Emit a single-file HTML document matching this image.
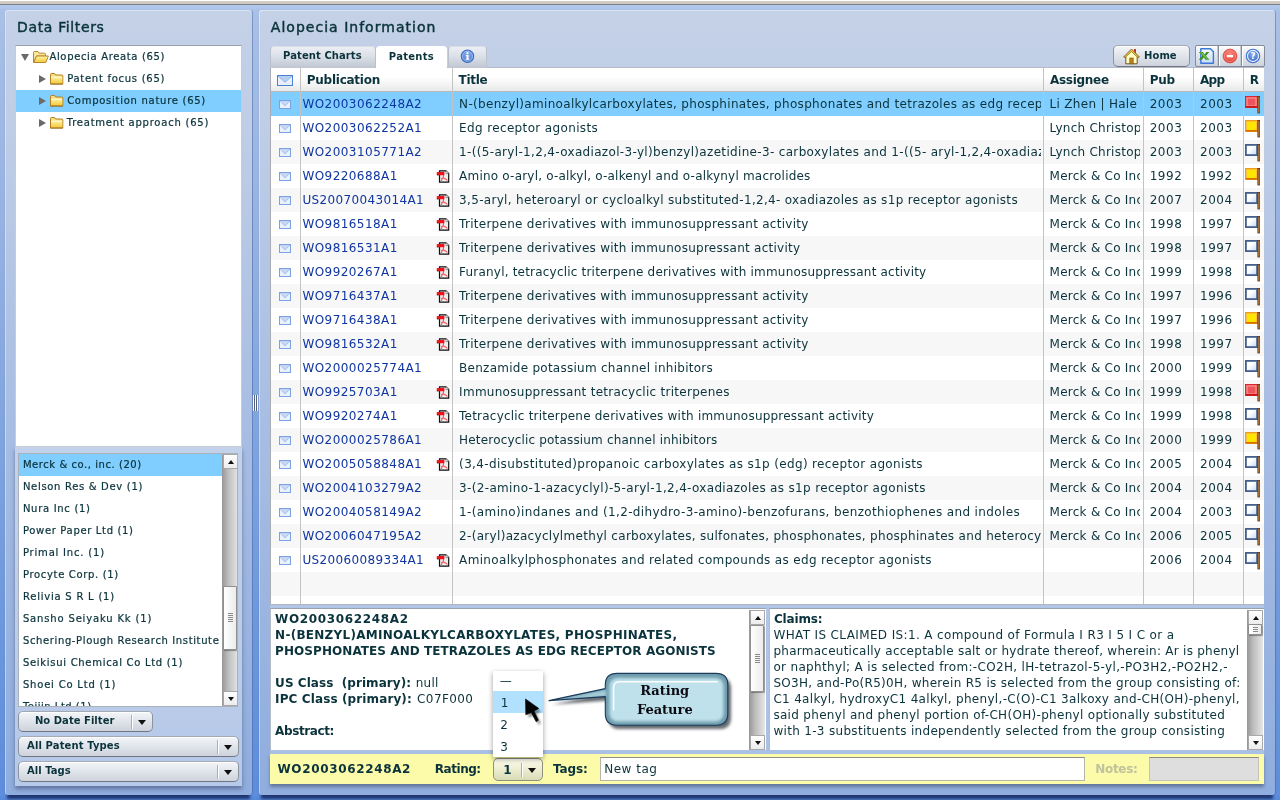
<!DOCTYPE html>
<html lang="en"><head><meta charset="utf-8"><title>Alopecia Information</title>
<style>
*{box-sizing:border-box;margin:0;padding:0}
html,body{width:1280px;height:800px;overflow:hidden}
body{position:relative;font-family:"DejaVu Sans", "Liberation Sans", sans-serif;font-size:12px;color:#0b333c;
 background:linear-gradient(to bottom,#fff 0,#fff 1px,#d6d2c9 1px,#c9c5bc 4px,#7f7f86 4px,#7f7f86 5px,#b1c9ef 5px,#a9c0e6 12px,#8eade0 300px,#6f99dc 600px,#5d8ddb 795px,#5788d8 800px);}
#root{position:absolute;left:0;top:0;width:1280px;height:800px;will-change:transform}
.abs{position:absolute}
.panel{position:absolute;border-radius:3px;background:linear-gradient(to bottom,#c4d1e7 0,#bfcde6 120px,#a9bee3 400px,#98b3e0 650px,#8fadde 785px);
 box-shadow:0 6px 3px -2px rgba(22,42,98,.88), 1px 0 0 rgba(70,100,160,.45), inset 1px 1px 0 rgba(255,255,255,.4);}
.ptitle{position:absolute;font-size:15px;line-height:18px;white-space:nowrap}
.nw{white-space:nowrap}
.t{position:absolute;white-space:pre;line-height:1}
.selbg{background:#7fceff}
.ttl{-webkit-text-stroke:.45px #0b333c}
.s10{-webkit-text-stroke:.22px #0b333c}
.tri.dn3{border-width:5px 4px 0 4px;border-color:#111 transparent transparent transparent}
svg{display:block;position:absolute}
.treebox{background:#fff;border-top:1px solid #9aa3ad;border-left:1px solid #c4ccd6;border-right:1px solid #c4ccd6;border-bottom:1px solid #c9d0d8;overflow:hidden}
.trow{position:absolute;left:0;width:100%;height:22px}
.trow.sel,.lrow.sel{background:#7fceff}
.tlabel{position:absolute;top:4px;font-size:10px;line-height:13px;letter-spacing:.55px;white-space:nowrap}
.tri{position:absolute;width:0;height:0;border-style:solid}
.tri.dn{border-width:7px 4px 0 4px;border-color:#6a6a6a transparent transparent transparent}
.tri.rt{border-width:4px 0 4px 7px;border-color:transparent transparent transparent #6a6a6a}
.tri.up{border-width:0 3px 4px 3px;border-color:transparent transparent #111 transparent}
.tri.dn2{border-width:4px 3.5px 0 3.5px;border-color:#111 transparent transparent transparent}
.lowbox{background:rgba(240,242,247,.4);box-shadow:0 3px 4px rgba(50,62,100,.5)}
.listbox{background:#fff;border:1px solid #a9b1ba;overflow:hidden}
.lrow{position:absolute;left:0;width:204px;height:22px;padding:4px 0 0 4px;font-size:10px;line-height:13px;letter-spacing:.5px;white-space:nowrap;overflow:hidden}
.vsb{position:absolute;background:linear-gradient(to right,#9c9c9c 0,#bdbdbd 35%,#e6e6e6 100%);border-left:1px solid #9a9a9a}
.sbtn{position:absolute;left:0;width:15px;height:15px;background:linear-gradient(#fff,#ececec);border:1px solid #a8a8a8}
.sthumb{position:absolute;left:0;width:14px;background:linear-gradient(to right,#fff,#ececec);border:1px solid #8f8f8f;border-radius:1px;box-shadow:1px 1px 1px rgba(0,0,0,.35)}
.sthumb i{position:absolute;left:4px;top:50%;margin-top:-5px;width:5px;height:9px;background:repeating-linear-gradient(to bottom,#8a8a8a 0,#8a8a8a 1px,transparent 1px,transparent 2px)}
.fbtn{border:1px solid #8c939d;border-top-color:#a4aab3;border-bottom-color:#6f7680;border-radius:5px;background:linear-gradient(#f3f5f8 0,#e2e6ec 45%,#cdd2dc 100%);font-size:10px;font-weight:bold;line-height:12px;box-shadow:inset 0 1px 0 #fff}

.tab{border:1px solid #b9c1cc;border-top-color:#d9dee6;border-bottom:none;border-radius:4px 4px 0 0;background:linear-gradient(#eceff4 0,#d9dee6 50%,#bfc6d1 100%);font-size:10px;font-weight:bold;line-height:12px}
.tab span{position:absolute;top:4px;white-space:nowrap}
.tab.on{background:#fff;border-color:#fff}
.ibar{border:1px solid #838c98;border-radius:2px;background:linear-gradient(#fbfcfd 0,#e4e8ee 45%,#cdd3dd 100%);box-shadow:inset 0 1px 0 #fff}
.ibar i{position:absolute;top:0;width:1px;height:20px;background:#838c98;box-shadow:1px 0 0 #fff,-1px 0 0 #c4cad4}
.grid{background:#fff;overflow:hidden}
.ghead{position:absolute;left:0;top:0;width:100%;height:24px;background:linear-gradient(#fff 0,#fff 40%,#e9e9e9 100%);border-bottom:1px solid #b9b9b9}
.hcell{position:absolute;top:4px;font-weight:bold;font-size:12px;line-height:15px;white-space:nowrap}
.grow{position:absolute;left:0;width:100%;height:24px}
.grow.alt{background:#f7f7f7}
.grow.sel{background:#7fceff}
.c{position:absolute;top:4px;line-height:15px;white-space:nowrap;overflow:hidden;letter-spacing:.3px}
.c.pub{color:#0f35a0}
.vline{position:absolute;top:0;width:1px;height:100%;background:#c3c3c3}
.dbox{background:#fff;border-top:1px solid #9aa3ad;border-left:1px solid #b5bcc5;overflow:hidden}
.dtext{position:absolute;line-height:16px;white-space:nowrap;letter-spacing:.2px}
.ls5{letter-spacing:.5px}
.ls2{letter-spacing:.2px}
.ybar{background:#fbfbaa;box-shadow:0 3px 3px rgba(60,68,90,.5)}
.fbtn.yb{background:linear-gradient(#fdfdf0 0,#ecedd0 50%,#d9dbb5 100%);border-color:#8f927a;font-size:12px}
.ddl{background:#fff;box-shadow:0 2px 5px rgba(0,0,0,.4);overflow:hidden}
.ddl div{position:absolute;left:0;width:100%;height:22px}
.ddl .hov{background:#b2e1ff}
.bsep{position:absolute;top:3px;width:1px;height:14px;background:#a9b0ba;box-shadow:1px 0 0 #fff}

</style></head><body>
<svg width="0" height="0" style="position:absolute"><defs>
<linearGradient id="fg" x1="0" y1="0" x2="0" y2="1"><stop offset="0" stop-color="#fff3a8"/><stop offset="1" stop-color="#f3c93a"/></linearGradient>
<linearGradient id="wf" x1="0" y1="0" x2="1" y2="1"><stop offset="0.4" stop-color="#fff"/><stop offset="1" stop-color="#bcd9f6"/></linearGradient>
<linearGradient id="xg" x1="0" y1="0" x2="0" y2="1"><stop offset="0" stop-color="#f2f7fe"/><stop offset="1" stop-color="#c9dcf7"/></linearGradient><radialGradient id="ig" cx=".5" cy=".35" r=".7"><stop offset="0" stop-color="#8fb2ee"/><stop offset="1" stop-color="#3f6fcb"/></radialGradient><radialGradient id="rg" cx=".5" cy=".35" r=".7"><stop offset="0" stop-color="#f98c80"/><stop offset="1" stop-color="#e2362f"/></radialGradient></defs></svg>
<div id="root">
<div class="panel" style="left:5px;top:10px;width:247px;height:785px"></div><span class="t ttl" style="left:17.09px;top:19.66px;font-size:14px;letter-spacing:0.634px;">Data Filters</span><div class="abs treebox" style="left:15px;top:45px;width:227px;height:402px"></div><span class="tri dn" style="left:21px;top:54px"></span><svg class="fold" style="left:33px;top:51px" width="16" height="12" viewBox="0 0 16 12"><path d="M0.5 11.5 V1.5 Q0.5 0.5 1.5 0.5 H5 L6.2 2.2 H11.5 Q12.5 2.2 12.5 3.2 V5 H3.6 Z" fill="#fbe9a0" stroke="#b8872c"/><path d="M0.8 11.5 L3.4 5 H15.4 L12.8 11.5 Z" fill="url(#fg)" stroke="#b8872c"/></svg><span class="t s10" style="left:49.45px;top:51.54px;font-size:10px;letter-spacing:0.653px;">Alopecia Areata (65)</span><span class="tri rt" style="left:39px;top:75px"></span><svg class="fold" style="left:50px;top:73px" width="14" height="12" viewBox="0 0 14 12"><path d="M0.5 11 V1.5 Q0.5 0.5 1.5 0.5 H4.6 L5.8 2 H11.8 Q12.8 2 12.8 3 V11 Z" fill="#f6dc7c" stroke="#b07f22"/><path d="M1 3.6 H12.3 V10.6 H1 Z" fill="url(#fg)"/><path d="M1.4 4.2 H11.8" stroke="#fffbe0" stroke-width=".9"/><path d="M0.5 11 H12.8" stroke="#9a6c18"/></svg><span class="t s10" style="left:67.15px;top:73.54px;font-size:10px;letter-spacing:0.730px;">Patent focus (65)</span><div class="abs selbg" style="left:16px;top:90px;width:225px;height:22px"></div><span class="tri rt" style="left:39px;top:97px"></span><svg class="fold" style="left:50px;top:95px" width="14" height="12" viewBox="0 0 14 12"><path d="M0.5 11 V1.5 Q0.5 0.5 1.5 0.5 H4.6 L5.8 2 H11.8 Q12.8 2 12.8 3 V11 Z" fill="#f6dc7c" stroke="#b07f22"/><path d="M1 3.6 H12.3 V10.6 H1 Z" fill="url(#fg)"/><path d="M1.4 4.2 H11.8" stroke="#fffbe0" stroke-width=".9"/><path d="M0.5 11 H12.8" stroke="#9a6c18"/></svg><span class="t s10" style="left:67.15px;top:95.54px;font-size:10px;letter-spacing:0.727px;">Composition nature (65)</span><span class="tri rt" style="left:39px;top:119px"></span><svg class="fold" style="left:50px;top:117px" width="14" height="12" viewBox="0 0 14 12"><path d="M0.5 11 V1.5 Q0.5 0.5 1.5 0.5 H4.6 L5.8 2 H11.8 Q12.8 2 12.8 3 V11 Z" fill="#f6dc7c" stroke="#b07f22"/><path d="M1 3.6 H12.3 V10.6 H1 Z" fill="url(#fg)"/><path d="M1.4 4.2 H11.8" stroke="#fffbe0" stroke-width=".9"/><path d="M0.5 11 H12.8" stroke="#9a6c18"/></svg><span class="t s10" style="left:66.75px;top:117.54px;font-size:10px;letter-spacing:0.774px;">Treatment approach (65)</span><div class="abs lowbox" style="left:15px;top:447px;width:227px;height:339px"></div><div class="abs listbox" style="left:18px;top:453px;width:220px;height:254px"><div class="abs" style="left:0;top:0;width:203px;height:252px;overflow:hidden"><div class="abs selbg" style="left:0;top:0px;width:203px;height:22px"></div><span class="t s10" style="left:3.95px;top:5.54px;font-size:10px;letter-spacing:0.553px;">Merck &amp; co., inc. (20)</span><span class="t s10" style="left:3.95px;top:27.54px;font-size:10px;letter-spacing:0.685px;">Nelson Res &amp; Dev (1)</span><span class="t s10" style="left:3.95px;top:49.54px;font-size:10px;letter-spacing:0.702px;">Nura Inc (1)</span><span class="t s10" style="left:3.95px;top:71.54px;font-size:10px;letter-spacing:0.666px;">Power Paper Ltd (1)</span><span class="t s10" style="left:3.95px;top:93.54px;font-size:10px;letter-spacing:0.801px;">Primal Inc. (1)</span><span class="t s10" style="left:3.95px;top:115.54px;font-size:10px;letter-spacing:0.667px;">Procyte Corp. (1)</span><span class="t s10" style="left:3.95px;top:137.54px;font-size:10px;letter-spacing:0.776px;">Relivia S R L (1)</span><span class="t s10" style="left:3.95px;top:159.54px;font-size:10px;letter-spacing:0.836px;">Sansho Seiyaku Kk (1)</span><span class="t s10" style="left:3.95px;top:181.54px;font-size:10px;letter-spacing:0.626px;">Schering-Plough Research Institute (1)</span><span class="t s10" style="left:3.95px;top:203.54px;font-size:10px;letter-spacing:0.704px;">Seikisui Chemical Co Ltd (1)</span><span class="t s10" style="left:3.95px;top:225.54px;font-size:10px;letter-spacing:0.801px;">Shoei Co Ltd (1)</span><span class="t s10" style="left:3.95px;top:247.54px;font-size:10px;letter-spacing:0.500px;">Teijin Ltd (1)</span></div><div class="vsb" style="left:203px;top:0;width:16px;height:252px"><div class="sbtn" style="top:0"><span class="tri up" style="left:4px;top:5px"></span></div><div class="sthumb" style="top:132px;height:64px"><i></i></div><div class="sbtn" style="bottom:0"><span class="tri dn2" style="left:4px;top:5px"></span></div></div></div><div class="abs fbtn" style="left:18px;top:710.5px;width:135px;height:21px"><i class="bsep" style="left:112px"></i><span class="tri dn3" style="left:118.5px;top:8px"></span></div><span class="t" style="left:34.95px;top:715.54px;font-size:10px;font-weight:bold;letter-spacing:0.035px;">No Date Filter</span><div class="abs fbtn" style="left:18px;top:735.5px;width:221px;height:21px"><i class="bsep" style="left:198px"></i><span class="tri dn3" style="left:204.5px;top:8px"></span></div><span class="t" style="left:27.10px;top:740.54px;font-size:10px;font-weight:bold;letter-spacing:0.112px;">All Patent Types</span><div class="abs fbtn" style="left:18px;top:760.5px;width:221px;height:21px"><i class="bsep" style="left:198px"></i><span class="tri dn3" style="left:204.5px;top:8px"></span></div><span class="t" style="left:27.10px;top:765.54px;font-size:10px;font-weight:bold;letter-spacing:0.012px;">All Tags</span><div class="abs" style="left:253px;top:395px;width:5px;height:16px;background:repeating-linear-gradient(to right,#fff 0,#fff 1px,#54607a 1px,#54607a 2px)"></div><div class="panel" style="left:259px;top:10px;width:1016px;height:785px"></div><span class="t ttl" style="left:270.79px;top:19.66px;font-size:14px;letter-spacing:1.022px;">Alopecia Information</span><div class="abs" style="left:270px;top:67px;width:994px;height:1px;background:#b4bbc6"></div><div class="abs tab" style="left:270px;top:46px;width:106px;height:22px"></div><span class="t" style="left:283.10px;top:50.54px;font-size:10px;font-weight:bold;letter-spacing:0.077px;">Patent Charts</span><div class="abs tab on" style="left:376px;top:46px;width:71px;height:22px"></div><span class="t" style="left:388.85px;top:51.54px;font-size:10px;font-weight:bold;letter-spacing:0.261px;">Patents</span><div class="abs tab" style="left:448px;top:46px;width:39px;height:22px"><svg width="15" height="15" viewBox="0 0 15 15" style="left:11px;top:2px"><circle cx="7.5" cy="7.2" r="6.2" fill="url(#ig)" stroke="#3d6cc4" stroke-width="1.1"/><circle cx="7.5" cy="7.2" r="5" fill="none" stroke="#a9c4f0" stroke-width=".8"/><rect x="6.6" y="6.1" width="1.9" height="4.4" fill="#fff"/><rect x="5.9" y="6.1" width="2" height="1" fill="#fff"/><rect x="5.8" y="9.7" width="3.5" height="1" fill="#fff"/><circle cx="7.5" cy="4.1" r="1.1" fill="#fff"/></svg></div><div class="abs fbtn" style="left:1113px;top:45px;width:77px;height:22px"><svg width="17" height="17" viewBox="0 0 17 17" style="left:9px;top:2px"><rect x="11" y="1" width="2" height="5" fill="#c0392b"/><path d="M8.5 1.2 L0.8 9 H2.8 V15.8 H14.2 V9 H16.2 Z" fill="#fffcc4" stroke="#6b5520" stroke-width="1"/><path d="M8.5 1.2 L0.8 9 H2.8 L8.5 3.6 L14.2 9 H16.2 Z" fill="#e9c95a" stroke="#9a741c" stroke-width=".8"/><rect x="6.8" y="10" width="3.4" height="5.8" fill="#b7811f" stroke="#7a5410" stroke-width=".6"/></svg></div><span class="t" style="left:1144.05px;top:50.54px;font-size:10px;font-weight:bold;letter-spacing:0.049px;">Home</span><div class="abs ibar" style="left:1195px;top:45px;width:70px;height:22px"><i style="left:22px"></i><i style="left:45px"></i><svg width="17" height="17" viewBox="0 0 17 17" style="left:2px;top:2px"><path d="M2.8 .8 H12.4 L15.4 3.8 V15.3 H2.8 Z" fill="url(#xg)" stroke="#3a78d8" stroke-width="1.4" stroke-linejoin="round"/><path d="M.8 4 H4.8 L6.6 6.4 L8.4 4 H11.4 L8 7.8 L11.4 11.7 H7.6 L5.8 9.3 L4 11.7 H.8 L4.2 7.8 Z" fill="#3d8f1e"/><path d="M2.2 4.6 L9.6 11.2 M3.4 4.6 L10.4 10.8" stroke="#8fd070" stroke-width=".7" fill="none"/></svg><svg width="16" height="16" viewBox="0 0 16 16" style="left:26px;top:2px"><circle cx="8" cy="8" r="6.9" fill="url(#rg)" stroke="#e0453c" stroke-width=".8"/><circle cx="8" cy="8" r="5.6" fill="none" stroke="#f7988c" stroke-width=".7"/><rect x="4.8" y="7" width="6.4" height="2.2" rx=".4" fill="#fff"/></svg><svg width="16" height="16" viewBox="0 0 16 16" style="left:49px;top:2px"><circle cx="8" cy="8" r="6.7" fill="#e9f0fb" stroke="#3f74d0" stroke-width="1.1"/><circle cx="8" cy="8" r="4.9" fill="url(#ig)"/><text x="8" y="11.2" text-anchor="middle" font-family="'DejaVu Sans',sans-serif" font-weight="bold" font-size="9" fill="#fff">?</text></svg></div><div class="abs grid" style="left:270px;top:68px;width:993.5px;height:536px"><div class="ghead"></div><svg class="mail" style="left:7px;top:7px" width="16" height="11" viewBox="0 0 16 11"><rect x="0.5" y="0.5" width="15" height="10" fill="#e9f0fc" stroke="#4a80d4"/><path d="M1 1 L8.0 7.260000000000001 L15 1 Z" fill="#8fb2ea" opacity=".55"/><path d="M1 1 L8.0 7.260000000000001 L15 1" fill="none" stroke="#8fb2ea" stroke-width="1"/></svg><span class="t" style="left:36.72px;top:5.85px;font-size:12px;font-weight:bold;letter-spacing:-0.246px;">Publication</span><span class="t" style="left:188.62px;top:5.85px;font-size:12px;font-weight:bold;letter-spacing:-0.309px;">Title</span><span class="t" style="left:780.02px;top:5.85px;font-size:12px;font-weight:bold;letter-spacing:-0.293px;">Assignee</span><span class="t" style="left:879.72px;top:5.85px;font-size:12px;font-weight:bold;letter-spacing:-0.239px;">Pub</span><span class="t" style="left:930.02px;top:5.85px;font-size:12px;font-weight:bold;letter-spacing:-0.754px;">App</span><span class="t" style="left:979.82px;top:5.85px;font-size:12px;font-weight:bold;">R</span><div class="grow sel" style="top:24px"></div><div class="grow" style="top:48px"></div><div class="grow alt" style="top:72px"></div><div class="grow" style="top:96px"></div><div class="grow alt" style="top:120px"></div><div class="grow" style="top:144px"></div><div class="grow alt" style="top:168px"></div><div class="grow" style="top:192px"></div><div class="grow alt" style="top:216px"></div><div class="grow" style="top:240px"></div><div class="grow alt" style="top:264px"></div><div class="grow" style="top:288px"></div><div class="grow alt" style="top:312px"></div><div class="grow" style="top:336px"></div><div class="grow alt" style="top:360px"></div><div class="grow" style="top:384px"></div><div class="grow alt" style="top:408px"></div><div class="grow" style="top:432px"></div><div class="grow alt" style="top:456px"></div><div class="grow" style="top:480px"></div><div class="grow alt" style="top:504px"></div><svg class="mail" style="left:9px;top:32px" width="12" height="9" viewBox="0 0 12 9"><rect x="0.5" y="0.5" width="11" height="8" fill="#eaf1fc" stroke="#79a2e4"/><path d="M1 1 L6.0 5.94 L11 1 Z" fill="#a9c3ee" opacity=".55"/><path d="M1 1 L6.0 5.94 L11 1" fill="none" stroke="#a9c3ee" stroke-width="1"/></svg><svg class="mail" style="left:9px;top:56px" width="12" height="9" viewBox="0 0 12 9"><rect x="0.5" y="0.5" width="11" height="8" fill="#eaf1fc" stroke="#79a2e4"/><path d="M1 1 L6.0 5.94 L11 1 Z" fill="#a9c3ee" opacity=".55"/><path d="M1 1 L6.0 5.94 L11 1" fill="none" stroke="#a9c3ee" stroke-width="1"/></svg><svg class="mail" style="left:9px;top:80px" width="12" height="9" viewBox="0 0 12 9"><rect x="0.5" y="0.5" width="11" height="8" fill="#eaf1fc" stroke="#79a2e4"/><path d="M1 1 L6.0 5.94 L11 1 Z" fill="#a9c3ee" opacity=".55"/><path d="M1 1 L6.0 5.94 L11 1" fill="none" stroke="#a9c3ee" stroke-width="1"/></svg><svg class="mail" style="left:9px;top:104px" width="12" height="9" viewBox="0 0 12 9"><rect x="0.5" y="0.5" width="11" height="8" fill="#eaf1fc" stroke="#79a2e4"/><path d="M1 1 L6.0 5.94 L11 1 Z" fill="#a9c3ee" opacity=".55"/><path d="M1 1 L6.0 5.94 L11 1" fill="none" stroke="#a9c3ee" stroke-width="1"/></svg><svg class="mail" style="left:9px;top:128px" width="12" height="9" viewBox="0 0 12 9"><rect x="0.5" y="0.5" width="11" height="8" fill="#eaf1fc" stroke="#79a2e4"/><path d="M1 1 L6.0 5.94 L11 1 Z" fill="#a9c3ee" opacity=".55"/><path d="M1 1 L6.0 5.94 L11 1" fill="none" stroke="#a9c3ee" stroke-width="1"/></svg><svg class="mail" style="left:9px;top:152px" width="12" height="9" viewBox="0 0 12 9"><rect x="0.5" y="0.5" width="11" height="8" fill="#eaf1fc" stroke="#79a2e4"/><path d="M1 1 L6.0 5.94 L11 1 Z" fill="#a9c3ee" opacity=".55"/><path d="M1 1 L6.0 5.94 L11 1" fill="none" stroke="#a9c3ee" stroke-width="1"/></svg><svg class="mail" style="left:9px;top:176px" width="12" height="9" viewBox="0 0 12 9"><rect x="0.5" y="0.5" width="11" height="8" fill="#eaf1fc" stroke="#79a2e4"/><path d="M1 1 L6.0 5.94 L11 1 Z" fill="#a9c3ee" opacity=".55"/><path d="M1 1 L6.0 5.94 L11 1" fill="none" stroke="#a9c3ee" stroke-width="1"/></svg><svg class="mail" style="left:9px;top:200px" width="12" height="9" viewBox="0 0 12 9"><rect x="0.5" y="0.5" width="11" height="8" fill="#eaf1fc" stroke="#79a2e4"/><path d="M1 1 L6.0 5.94 L11 1 Z" fill="#a9c3ee" opacity=".55"/><path d="M1 1 L6.0 5.94 L11 1" fill="none" stroke="#a9c3ee" stroke-width="1"/></svg><svg class="mail" style="left:9px;top:224px" width="12" height="9" viewBox="0 0 12 9"><rect x="0.5" y="0.5" width="11" height="8" fill="#eaf1fc" stroke="#79a2e4"/><path d="M1 1 L6.0 5.94 L11 1 Z" fill="#a9c3ee" opacity=".55"/><path d="M1 1 L6.0 5.94 L11 1" fill="none" stroke="#a9c3ee" stroke-width="1"/></svg><svg class="mail" style="left:9px;top:248px" width="12" height="9" viewBox="0 0 12 9"><rect x="0.5" y="0.5" width="11" height="8" fill="#eaf1fc" stroke="#79a2e4"/><path d="M1 1 L6.0 5.94 L11 1 Z" fill="#a9c3ee" opacity=".55"/><path d="M1 1 L6.0 5.94 L11 1" fill="none" stroke="#a9c3ee" stroke-width="1"/></svg><svg class="mail" style="left:9px;top:272px" width="12" height="9" viewBox="0 0 12 9"><rect x="0.5" y="0.5" width="11" height="8" fill="#eaf1fc" stroke="#79a2e4"/><path d="M1 1 L6.0 5.94 L11 1 Z" fill="#a9c3ee" opacity=".55"/><path d="M1 1 L6.0 5.94 L11 1" fill="none" stroke="#a9c3ee" stroke-width="1"/></svg><svg class="mail" style="left:9px;top:296px" width="12" height="9" viewBox="0 0 12 9"><rect x="0.5" y="0.5" width="11" height="8" fill="#eaf1fc" stroke="#79a2e4"/><path d="M1 1 L6.0 5.94 L11 1 Z" fill="#a9c3ee" opacity=".55"/><path d="M1 1 L6.0 5.94 L11 1" fill="none" stroke="#a9c3ee" stroke-width="1"/></svg><svg class="mail" style="left:9px;top:320px" width="12" height="9" viewBox="0 0 12 9"><rect x="0.5" y="0.5" width="11" height="8" fill="#eaf1fc" stroke="#79a2e4"/><path d="M1 1 L6.0 5.94 L11 1 Z" fill="#a9c3ee" opacity=".55"/><path d="M1 1 L6.0 5.94 L11 1" fill="none" stroke="#a9c3ee" stroke-width="1"/></svg><svg class="mail" style="left:9px;top:344px" width="12" height="9" viewBox="0 0 12 9"><rect x="0.5" y="0.5" width="11" height="8" fill="#eaf1fc" stroke="#79a2e4"/><path d="M1 1 L6.0 5.94 L11 1 Z" fill="#a9c3ee" opacity=".55"/><path d="M1 1 L6.0 5.94 L11 1" fill="none" stroke="#a9c3ee" stroke-width="1"/></svg><svg class="mail" style="left:9px;top:368px" width="12" height="9" viewBox="0 0 12 9"><rect x="0.5" y="0.5" width="11" height="8" fill="#eaf1fc" stroke="#79a2e4"/><path d="M1 1 L6.0 5.94 L11 1 Z" fill="#a9c3ee" opacity=".55"/><path d="M1 1 L6.0 5.94 L11 1" fill="none" stroke="#a9c3ee" stroke-width="1"/></svg><svg class="mail" style="left:9px;top:392px" width="12" height="9" viewBox="0 0 12 9"><rect x="0.5" y="0.5" width="11" height="8" fill="#eaf1fc" stroke="#79a2e4"/><path d="M1 1 L6.0 5.94 L11 1 Z" fill="#a9c3ee" opacity=".55"/><path d="M1 1 L6.0 5.94 L11 1" fill="none" stroke="#a9c3ee" stroke-width="1"/></svg><svg class="mail" style="left:9px;top:416px" width="12" height="9" viewBox="0 0 12 9"><rect x="0.5" y="0.5" width="11" height="8" fill="#eaf1fc" stroke="#79a2e4"/><path d="M1 1 L6.0 5.94 L11 1 Z" fill="#a9c3ee" opacity=".55"/><path d="M1 1 L6.0 5.94 L11 1" fill="none" stroke="#a9c3ee" stroke-width="1"/></svg><svg class="mail" style="left:9px;top:440px" width="12" height="9" viewBox="0 0 12 9"><rect x="0.5" y="0.5" width="11" height="8" fill="#eaf1fc" stroke="#79a2e4"/><path d="M1 1 L6.0 5.94 L11 1 Z" fill="#a9c3ee" opacity=".55"/><path d="M1 1 L6.0 5.94 L11 1" fill="none" stroke="#a9c3ee" stroke-width="1"/></svg><svg class="mail" style="left:9px;top:464px" width="12" height="9" viewBox="0 0 12 9"><rect x="0.5" y="0.5" width="11" height="8" fill="#eaf1fc" stroke="#79a2e4"/><path d="M1 1 L6.0 5.94 L11 1 Z" fill="#a9c3ee" opacity=".55"/><path d="M1 1 L6.0 5.94 L11 1" fill="none" stroke="#a9c3ee" stroke-width="1"/></svg><svg class="mail" style="left:9px;top:488px" width="12" height="9" viewBox="0 0 12 9"><rect x="0.5" y="0.5" width="11" height="8" fill="#eaf1fc" stroke="#79a2e4"/><path d="M1 1 L6.0 5.94 L11 1 Z" fill="#a9c3ee" opacity=".55"/><path d="M1 1 L6.0 5.94 L11 1" fill="none" stroke="#a9c3ee" stroke-width="1"/></svg><div class="abs" style="left:31px;top:24px;width:151px;height:512px;overflow:hidden"><span class="t" style="left:1.42px;top:5.85px;font-size:12px;letter-spacing:0.450px;color:#0f35a0;">WO2003062248A2</span><span class="t" style="left:1.42px;top:29.85px;font-size:12px;letter-spacing:0.450px;color:#0f35a0;">WO2003062252A1</span><span class="t" style="left:1.42px;top:53.85px;font-size:12px;letter-spacing:0.450px;color:#0f35a0;">WO2003105771A2</span><span class="t" style="left:1.42px;top:77.85px;font-size:12px;letter-spacing:0.435px;color:#0f35a0;">WO9220688A1</span><svg class="pdf" style="left:135px;top:77.5px" width="14" height="13" viewBox="0 0 14 13"><path d="M3.5 0.8 H10 L12.7 3.5 V12.2 H3.5 Z" fill="#ececec" stroke="#111" stroke-width="1.2"/><path d="M10 0.8 V3.5 H12.7" fill="#fff" stroke="#555" stroke-width="0.6"/><path d="M5 11 C7 8 8 6 7.6 4.6 M5.2 8.6 C7 7.6 9.5 8.4 11.4 10.4" fill="none" stroke="#f0565a" stroke-width="1.1"/><rect x="0.8" y="2" width="7.6" height="3.2" rx="0.6" fill="#f0121a"/><rect x="0.8" y="4.4" width="1.6" height="1" fill="#7a3a10"/></svg><span class="t" style="left:1.42px;top:101.85px;font-size:12px;letter-spacing:0.366px;color:#0f35a0;">US20070043014A1</span><svg class="pdf" style="left:135px;top:101.5px" width="14" height="13" viewBox="0 0 14 13"><path d="M3.5 0.8 H10 L12.7 3.5 V12.2 H3.5 Z" fill="#ececec" stroke="#111" stroke-width="1.2"/><path d="M10 0.8 V3.5 H12.7" fill="#fff" stroke="#555" stroke-width="0.6"/><path d="M5 11 C7 8 8 6 7.6 4.6 M5.2 8.6 C7 7.6 9.5 8.4 11.4 10.4" fill="none" stroke="#f0565a" stroke-width="1.1"/><rect x="0.8" y="2" width="7.6" height="3.2" rx="0.6" fill="#f0121a"/><rect x="0.8" y="4.4" width="1.6" height="1" fill="#7a3a10"/></svg><span class="t" style="left:1.42px;top:125.85px;font-size:12px;letter-spacing:0.435px;color:#0f35a0;">WO9816518A1</span><svg class="pdf" style="left:135px;top:125.5px" width="14" height="13" viewBox="0 0 14 13"><path d="M3.5 0.8 H10 L12.7 3.5 V12.2 H3.5 Z" fill="#ececec" stroke="#111" stroke-width="1.2"/><path d="M10 0.8 V3.5 H12.7" fill="#fff" stroke="#555" stroke-width="0.6"/><path d="M5 11 C7 8 8 6 7.6 4.6 M5.2 8.6 C7 7.6 9.5 8.4 11.4 10.4" fill="none" stroke="#f0565a" stroke-width="1.1"/><rect x="0.8" y="2" width="7.6" height="3.2" rx="0.6" fill="#f0121a"/><rect x="0.8" y="4.4" width="1.6" height="1" fill="#7a3a10"/></svg><span class="t" style="left:1.42px;top:149.85px;font-size:12px;letter-spacing:0.435px;color:#0f35a0;">WO9816531A1</span><svg class="pdf" style="left:135px;top:149.5px" width="14" height="13" viewBox="0 0 14 13"><path d="M3.5 0.8 H10 L12.7 3.5 V12.2 H3.5 Z" fill="#ececec" stroke="#111" stroke-width="1.2"/><path d="M10 0.8 V3.5 H12.7" fill="#fff" stroke="#555" stroke-width="0.6"/><path d="M5 11 C7 8 8 6 7.6 4.6 M5.2 8.6 C7 7.6 9.5 8.4 11.4 10.4" fill="none" stroke="#f0565a" stroke-width="1.1"/><rect x="0.8" y="2" width="7.6" height="3.2" rx="0.6" fill="#f0121a"/><rect x="0.8" y="4.4" width="1.6" height="1" fill="#7a3a10"/></svg><span class="t" style="left:1.42px;top:173.85px;font-size:12px;letter-spacing:0.435px;color:#0f35a0;">WO9920267A1</span><svg class="pdf" style="left:135px;top:173.5px" width="14" height="13" viewBox="0 0 14 13"><path d="M3.5 0.8 H10 L12.7 3.5 V12.2 H3.5 Z" fill="#ececec" stroke="#111" stroke-width="1.2"/><path d="M10 0.8 V3.5 H12.7" fill="#fff" stroke="#555" stroke-width="0.6"/><path d="M5 11 C7 8 8 6 7.6 4.6 M5.2 8.6 C7 7.6 9.5 8.4 11.4 10.4" fill="none" stroke="#f0565a" stroke-width="1.1"/><rect x="0.8" y="2" width="7.6" height="3.2" rx="0.6" fill="#f0121a"/><rect x="0.8" y="4.4" width="1.6" height="1" fill="#7a3a10"/></svg><span class="t" style="left:1.42px;top:197.85px;font-size:12px;letter-spacing:0.435px;color:#0f35a0;">WO9716437A1</span><svg class="pdf" style="left:135px;top:197.5px" width="14" height="13" viewBox="0 0 14 13"><path d="M3.5 0.8 H10 L12.7 3.5 V12.2 H3.5 Z" fill="#ececec" stroke="#111" stroke-width="1.2"/><path d="M10 0.8 V3.5 H12.7" fill="#fff" stroke="#555" stroke-width="0.6"/><path d="M5 11 C7 8 8 6 7.6 4.6 M5.2 8.6 C7 7.6 9.5 8.4 11.4 10.4" fill="none" stroke="#f0565a" stroke-width="1.1"/><rect x="0.8" y="2" width="7.6" height="3.2" rx="0.6" fill="#f0121a"/><rect x="0.8" y="4.4" width="1.6" height="1" fill="#7a3a10"/></svg><span class="t" style="left:1.42px;top:221.85px;font-size:12px;letter-spacing:0.435px;color:#0f35a0;">WO9716438A1</span><svg class="pdf" style="left:135px;top:221.5px" width="14" height="13" viewBox="0 0 14 13"><path d="M3.5 0.8 H10 L12.7 3.5 V12.2 H3.5 Z" fill="#ececec" stroke="#111" stroke-width="1.2"/><path d="M10 0.8 V3.5 H12.7" fill="#fff" stroke="#555" stroke-width="0.6"/><path d="M5 11 C7 8 8 6 7.6 4.6 M5.2 8.6 C7 7.6 9.5 8.4 11.4 10.4" fill="none" stroke="#f0565a" stroke-width="1.1"/><rect x="0.8" y="2" width="7.6" height="3.2" rx="0.6" fill="#f0121a"/><rect x="0.8" y="4.4" width="1.6" height="1" fill="#7a3a10"/></svg><span class="t" style="left:1.42px;top:245.85px;font-size:12px;letter-spacing:0.435px;color:#0f35a0;">WO9816532A1</span><svg class="pdf" style="left:135px;top:245.5px" width="14" height="13" viewBox="0 0 14 13"><path d="M3.5 0.8 H10 L12.7 3.5 V12.2 H3.5 Z" fill="#ececec" stroke="#111" stroke-width="1.2"/><path d="M10 0.8 V3.5 H12.7" fill="#fff" stroke="#555" stroke-width="0.6"/><path d="M5 11 C7 8 8 6 7.6 4.6 M5.2 8.6 C7 7.6 9.5 8.4 11.4 10.4" fill="none" stroke="#f0565a" stroke-width="1.1"/><rect x="0.8" y="2" width="7.6" height="3.2" rx="0.6" fill="#f0121a"/><rect x="0.8" y="4.4" width="1.6" height="1" fill="#7a3a10"/></svg><span class="t" style="left:1.42px;top:269.85px;font-size:12px;letter-spacing:0.450px;color:#0f35a0;">WO2000025774A1</span><span class="t" style="left:1.42px;top:293.85px;font-size:12px;letter-spacing:0.435px;color:#0f35a0;">WO9925703A1</span><svg class="pdf" style="left:135px;top:293.5px" width="14" height="13" viewBox="0 0 14 13"><path d="M3.5 0.8 H10 L12.7 3.5 V12.2 H3.5 Z" fill="#ececec" stroke="#111" stroke-width="1.2"/><path d="M10 0.8 V3.5 H12.7" fill="#fff" stroke="#555" stroke-width="0.6"/><path d="M5 11 C7 8 8 6 7.6 4.6 M5.2 8.6 C7 7.6 9.5 8.4 11.4 10.4" fill="none" stroke="#f0565a" stroke-width="1.1"/><rect x="0.8" y="2" width="7.6" height="3.2" rx="0.6" fill="#f0121a"/><rect x="0.8" y="4.4" width="1.6" height="1" fill="#7a3a10"/></svg><span class="t" style="left:1.42px;top:317.85px;font-size:12px;letter-spacing:0.435px;color:#0f35a0;">WO9920274A1</span><svg class="pdf" style="left:135px;top:317.5px" width="14" height="13" viewBox="0 0 14 13"><path d="M3.5 0.8 H10 L12.7 3.5 V12.2 H3.5 Z" fill="#ececec" stroke="#111" stroke-width="1.2"/><path d="M10 0.8 V3.5 H12.7" fill="#fff" stroke="#555" stroke-width="0.6"/><path d="M5 11 C7 8 8 6 7.6 4.6 M5.2 8.6 C7 7.6 9.5 8.4 11.4 10.4" fill="none" stroke="#f0565a" stroke-width="1.1"/><rect x="0.8" y="2" width="7.6" height="3.2" rx="0.6" fill="#f0121a"/><rect x="0.8" y="4.4" width="1.6" height="1" fill="#7a3a10"/></svg><span class="t" style="left:1.42px;top:341.85px;font-size:12px;letter-spacing:0.450px;color:#0f35a0;">WO2000025786A1</span><span class="t" style="left:1.42px;top:365.85px;font-size:12px;letter-spacing:0.450px;color:#0f35a0;">WO2005058848A1</span><svg class="pdf" style="left:135px;top:365.5px" width="14" height="13" viewBox="0 0 14 13"><path d="M3.5 0.8 H10 L12.7 3.5 V12.2 H3.5 Z" fill="#ececec" stroke="#111" stroke-width="1.2"/><path d="M10 0.8 V3.5 H12.7" fill="#fff" stroke="#555" stroke-width="0.6"/><path d="M5 11 C7 8 8 6 7.6 4.6 M5.2 8.6 C7 7.6 9.5 8.4 11.4 10.4" fill="none" stroke="#f0565a" stroke-width="1.1"/><rect x="0.8" y="2" width="7.6" height="3.2" rx="0.6" fill="#f0121a"/><rect x="0.8" y="4.4" width="1.6" height="1" fill="#7a3a10"/></svg><span class="t" style="left:1.42px;top:389.85px;font-size:12px;letter-spacing:0.450px;color:#0f35a0;">WO2004103279A2</span><span class="t" style="left:1.42px;top:413.85px;font-size:12px;letter-spacing:0.450px;color:#0f35a0;">WO2004058149A2</span><span class="t" style="left:1.42px;top:437.85px;font-size:12px;letter-spacing:0.450px;color:#0f35a0;">WO2006047195A2</span><span class="t" style="left:1.42px;top:461.85px;font-size:12px;letter-spacing:0.366px;color:#0f35a0;">US20060089334A1</span><svg class="pdf" style="left:135px;top:461.5px" width="14" height="13" viewBox="0 0 14 13"><path d="M3.5 0.8 H10 L12.7 3.5 V12.2 H3.5 Z" fill="#ececec" stroke="#111" stroke-width="1.2"/><path d="M10 0.8 V3.5 H12.7" fill="#fff" stroke="#555" stroke-width="0.6"/><path d="M5 11 C7 8 8 6 7.6 4.6 M5.2 8.6 C7 7.6 9.5 8.4 11.4 10.4" fill="none" stroke="#f0565a" stroke-width="1.1"/><rect x="0.8" y="2" width="7.6" height="3.2" rx="0.6" fill="#f0121a"/><rect x="0.8" y="4.4" width="1.6" height="1" fill="#7a3a10"/></svg></div><div class="abs" style="left:183px;top:24px;width:588px;height:512px;overflow:hidden"><span class="t" style="left:6.12px;top:5.85px;font-size:12px;letter-spacing:0.320px;">N-(benzyl)aminoalkylcarboxylates, phosphinates, phosphonates and tetrazoles as edg receptor agonists</span><span class="t" style="left:6.12px;top:29.85px;font-size:12px;letter-spacing:0.356px;">Edg receptor agonists</span><span class="t" style="left:6.12px;top:53.85px;font-size:12px;letter-spacing:0.330px;">1-((5-aryl-1,2,4-oxadiazol-3-yl)benzyl)azetidine-3- carboxylates and 1-((5- aryl-1,2,4-oxadiazol-3-yl)benzyl)</span><span class="t" style="left:6.12px;top:77.85px;font-size:12px;letter-spacing:0.205px;">Amino o-aryl, o-alkyl, o-alkenyl and o-alkynyl macrolides</span><span class="t" style="left:6.12px;top:101.85px;font-size:12px;letter-spacing:0.315px;">3,5-aryl, heteroaryl or cycloalkyl substituted-1,2,4- oxadiazoles as s1p receptor agonists</span><span class="t" style="left:6.12px;top:125.85px;font-size:12px;letter-spacing:0.271px;">Triterpene derivatives with immunosuppressant activity</span><span class="t" style="left:6.12px;top:149.85px;font-size:12px;letter-spacing:0.265px;">Triterpene derivatives with immunosupressant activity</span><span class="t" style="left:6.12px;top:173.85px;font-size:12px;letter-spacing:0.200px;">Furanyl, tetracyclic triterpene derivatives with immunosuppressant activity</span><span class="t" style="left:6.12px;top:197.85px;font-size:12px;letter-spacing:0.271px;">Triterpene derivatives with immunosuppressant activity</span><span class="t" style="left:6.12px;top:221.85px;font-size:12px;letter-spacing:0.271px;">Triterpene derivatives with immunosuppressant activity</span><span class="t" style="left:6.12px;top:245.85px;font-size:12px;letter-spacing:0.271px;">Triterpene derivatives with immunosuppressant activity</span><span class="t" style="left:6.12px;top:269.85px;font-size:12px;letter-spacing:0.260px;">Benzamide potassium channel inhibitors</span><span class="t" style="left:6.12px;top:293.85px;font-size:12px;letter-spacing:0.277px;">Immunosuppressant tetracyclic triterpenes</span><span class="t" style="left:6.12px;top:317.85px;font-size:12px;letter-spacing:0.209px;">Tetracyclic triterpene derivatives with immunosuppressant activity</span><span class="t" style="left:6.12px;top:341.85px;font-size:12px;letter-spacing:0.174px;">Heterocyclic potassium channel inhibitors</span><span class="t" style="left:6.12px;top:365.85px;font-size:12px;letter-spacing:0.348px;">(3,4-disubstituted)propanoic carboxylates as s1p (edg) receptor agonists</span><span class="t" style="left:6.12px;top:389.85px;font-size:12px;letter-spacing:0.331px;">3-(2-amino-1-azacyclyl)-5-aryl-1,2,4-oxadiazoles as s1p receptor agonists</span><span class="t" style="left:6.12px;top:413.85px;font-size:12px;letter-spacing:0.370px;">1-(amino)indanes and (1,2-dihydro-3-amino)-benzofurans, benzothiophenes and indoles</span><span class="t" style="left:6.12px;top:437.85px;font-size:12px;letter-spacing:0.310px;">2-(aryl)azacyclylmethyl carboxylates, sulfonates, phosphonates, phosphinates and heterocycles</span><span class="t" style="left:6.12px;top:461.85px;font-size:12px;letter-spacing:0.340px;">Aminoalkylphosphonates and related compounds as edg receptor agonists</span></div><div class="abs" style="left:774px;top:24px;width:96.40000000000009px;height:512px;overflow:hidden"><span class="t" style="left:5.62px;top:5.85px;font-size:12px;letter-spacing:0.295px;">Li Zhen | Hale Jeffrey</span><span class="t" style="left:5.62px;top:29.85px;font-size:12px;letter-spacing:0.250px;">Lynch Christopher</span><span class="t" style="left:5.62px;top:53.85px;font-size:12px;letter-spacing:0.250px;">Lynch Christopher</span><span class="t" style="left:5.62px;top:77.85px;font-size:12px;letter-spacing:0.250px;">Merck &amp; Co Inc</span><span class="t" style="left:5.62px;top:101.85px;font-size:12px;letter-spacing:0.250px;">Merck &amp; Co Inc</span><span class="t" style="left:5.62px;top:125.85px;font-size:12px;letter-spacing:0.250px;">Merck &amp; Co Inc</span><span class="t" style="left:5.62px;top:149.85px;font-size:12px;letter-spacing:0.250px;">Merck &amp; Co Inc</span><span class="t" style="left:5.62px;top:173.85px;font-size:12px;letter-spacing:0.250px;">Merck &amp; Co Inc</span><span class="t" style="left:5.62px;top:197.85px;font-size:12px;letter-spacing:0.250px;">Merck &amp; Co Inc</span><span class="t" style="left:5.62px;top:221.85px;font-size:12px;letter-spacing:0.250px;">Merck &amp; Co Inc</span><span class="t" style="left:5.62px;top:245.85px;font-size:12px;letter-spacing:0.250px;">Merck &amp; Co Inc</span><span class="t" style="left:5.62px;top:269.85px;font-size:12px;letter-spacing:0.250px;">Merck &amp; Co Inc</span><span class="t" style="left:5.62px;top:293.85px;font-size:12px;letter-spacing:0.250px;">Merck &amp; Co Inc</span><span class="t" style="left:5.62px;top:317.85px;font-size:12px;letter-spacing:0.250px;">Merck &amp; Co Inc</span><span class="t" style="left:5.62px;top:341.85px;font-size:12px;letter-spacing:0.250px;">Merck &amp; Co Inc</span><span class="t" style="left:5.62px;top:365.85px;font-size:12px;letter-spacing:0.250px;">Merck &amp; Co Inc</span><span class="t" style="left:5.62px;top:389.85px;font-size:12px;letter-spacing:0.250px;">Merck &amp; Co Inc</span><span class="t" style="left:5.62px;top:413.85px;font-size:12px;letter-spacing:0.250px;">Merck &amp; Co Inc</span><span class="t" style="left:5.62px;top:437.85px;font-size:12px;letter-spacing:0.250px;">Merck &amp; Co Inc</span></div><span class="t" style="left:879.72px;top:29.85px;font-size:12px;letter-spacing:0.504px;">2003</span><span class="t" style="left:930.02px;top:29.85px;font-size:12px;letter-spacing:0.538px;">2003</span><svg class="flag" style="left:975px;top:28px" width="16" height="18" viewBox="0 0 16 18"><rect x="0.5" y="0.5" width="12" height="11" fill="#ee5558" stroke="#d8262c"/><rect x="2" y="2" width="9" height="8" fill="none" stroke="#f8a0a0" stroke-width="1"/><rect x="1" y="10" width="11" height="1.5" fill="#c81414"/><rect x="12.4" y="0" width="2.6" height="17.4" fill="#6b3a14"/><rect x="13.4" y="1" width="1" height="15.6" fill="#c98a4a"/></svg><span class="t" style="left:879.72px;top:53.85px;font-size:12px;letter-spacing:0.504px;">2003</span><span class="t" style="left:930.02px;top:53.85px;font-size:12px;letter-spacing:0.538px;">2003</span><svg class="flag" style="left:975px;top:52px" width="16" height="18" viewBox="0 0 16 18"><rect x="0.5" y="0.5" width="12" height="11" fill="#ffe600" stroke="#f29a12"/><rect x="1.5" y="1.5" width="10" height="9" fill="none" stroke="#fbc040" stroke-width="1"/><rect x="1" y="10" width="11" height="1.5" fill="#d86a08"/><rect x="12.4" y="0" width="2.6" height="17.4" fill="#6b3a14"/><rect x="13.4" y="1" width="1" height="15.6" fill="#c98a4a"/></svg><span class="t" style="left:879.72px;top:77.85px;font-size:12px;letter-spacing:0.504px;">2003</span><span class="t" style="left:930.02px;top:77.85px;font-size:12px;letter-spacing:0.538px;">2003</span><svg class="flag" style="left:975px;top:76px" width="16" height="18" viewBox="0 0 16 18"><rect x="0.9" y="0.9" width="11.2" height="10.2" fill="url(#wf)" stroke="#44608e" stroke-width="1.8"/><rect x="12.4" y="0" width="2.6" height="17.4" fill="#6b3a14"/><rect x="13.4" y="1" width="1" height="15.6" fill="#c98a4a"/></svg><span class="t" style="left:879.72px;top:101.85px;font-size:12px;letter-spacing:0.504px;">1992</span><span class="t" style="left:930.02px;top:101.85px;font-size:12px;letter-spacing:0.538px;">1992</span><svg class="flag" style="left:975px;top:100px" width="16" height="18" viewBox="0 0 16 18"><rect x="0.5" y="0.5" width="12" height="11" fill="#ffe600" stroke="#f29a12"/><rect x="1.5" y="1.5" width="10" height="9" fill="none" stroke="#fbc040" stroke-width="1"/><rect x="1" y="10" width="11" height="1.5" fill="#d86a08"/><rect x="12.4" y="0" width="2.6" height="17.4" fill="#6b3a14"/><rect x="13.4" y="1" width="1" height="15.6" fill="#c98a4a"/></svg><span class="t" style="left:879.72px;top:125.85px;font-size:12px;letter-spacing:0.504px;">2007</span><span class="t" style="left:930.02px;top:125.85px;font-size:12px;letter-spacing:0.538px;">2004</span><svg class="flag" style="left:975px;top:124px" width="16" height="18" viewBox="0 0 16 18"><rect x="0.9" y="0.9" width="11.2" height="10.2" fill="url(#wf)" stroke="#44608e" stroke-width="1.8"/><rect x="12.4" y="0" width="2.6" height="17.4" fill="#6b3a14"/><rect x="13.4" y="1" width="1" height="15.6" fill="#c98a4a"/></svg><span class="t" style="left:879.72px;top:149.85px;font-size:12px;letter-spacing:0.504px;">1998</span><span class="t" style="left:930.02px;top:149.85px;font-size:12px;letter-spacing:0.538px;">1997</span><svg class="flag" style="left:975px;top:148px" width="16" height="18" viewBox="0 0 16 18"><rect x="0.9" y="0.9" width="11.2" height="10.2" fill="url(#wf)" stroke="#44608e" stroke-width="1.8"/><rect x="12.4" y="0" width="2.6" height="17.4" fill="#6b3a14"/><rect x="13.4" y="1" width="1" height="15.6" fill="#c98a4a"/></svg><span class="t" style="left:879.72px;top:173.85px;font-size:12px;letter-spacing:0.504px;">1998</span><span class="t" style="left:930.02px;top:173.85px;font-size:12px;letter-spacing:0.538px;">1997</span><svg class="flag" style="left:975px;top:172px" width="16" height="18" viewBox="0 0 16 18"><rect x="0.9" y="0.9" width="11.2" height="10.2" fill="url(#wf)" stroke="#44608e" stroke-width="1.8"/><rect x="12.4" y="0" width="2.6" height="17.4" fill="#6b3a14"/><rect x="13.4" y="1" width="1" height="15.6" fill="#c98a4a"/></svg><span class="t" style="left:879.72px;top:197.85px;font-size:12px;letter-spacing:0.504px;">1999</span><span class="t" style="left:930.02px;top:197.85px;font-size:12px;letter-spacing:0.538px;">1998</span><svg class="flag" style="left:975px;top:196px" width="16" height="18" viewBox="0 0 16 18"><rect x="0.9" y="0.9" width="11.2" height="10.2" fill="url(#wf)" stroke="#44608e" stroke-width="1.8"/><rect x="12.4" y="0" width="2.6" height="17.4" fill="#6b3a14"/><rect x="13.4" y="1" width="1" height="15.6" fill="#c98a4a"/></svg><span class="t" style="left:879.72px;top:221.85px;font-size:12px;letter-spacing:0.504px;">1997</span><span class="t" style="left:930.02px;top:221.85px;font-size:12px;letter-spacing:0.538px;">1996</span><svg class="flag" style="left:975px;top:220px" width="16" height="18" viewBox="0 0 16 18"><rect x="0.9" y="0.9" width="11.2" height="10.2" fill="url(#wf)" stroke="#44608e" stroke-width="1.8"/><rect x="12.4" y="0" width="2.6" height="17.4" fill="#6b3a14"/><rect x="13.4" y="1" width="1" height="15.6" fill="#c98a4a"/></svg><span class="t" style="left:879.72px;top:245.85px;font-size:12px;letter-spacing:0.504px;">1997</span><span class="t" style="left:930.02px;top:245.85px;font-size:12px;letter-spacing:0.538px;">1996</span><svg class="flag" style="left:975px;top:244px" width="16" height="18" viewBox="0 0 16 18"><rect x="0.5" y="0.5" width="12" height="11" fill="#ffe600" stroke="#f29a12"/><rect x="1.5" y="1.5" width="10" height="9" fill="none" stroke="#fbc040" stroke-width="1"/><rect x="1" y="10" width="11" height="1.5" fill="#d86a08"/><rect x="12.4" y="0" width="2.6" height="17.4" fill="#6b3a14"/><rect x="13.4" y="1" width="1" height="15.6" fill="#c98a4a"/></svg><span class="t" style="left:879.72px;top:269.85px;font-size:12px;letter-spacing:0.504px;">1998</span><span class="t" style="left:930.02px;top:269.85px;font-size:12px;letter-spacing:0.538px;">1997</span><svg class="flag" style="left:975px;top:268px" width="16" height="18" viewBox="0 0 16 18"><rect x="0.9" y="0.9" width="11.2" height="10.2" fill="url(#wf)" stroke="#44608e" stroke-width="1.8"/><rect x="12.4" y="0" width="2.6" height="17.4" fill="#6b3a14"/><rect x="13.4" y="1" width="1" height="15.6" fill="#c98a4a"/></svg><span class="t" style="left:879.72px;top:293.85px;font-size:12px;letter-spacing:0.504px;">2000</span><span class="t" style="left:930.02px;top:293.85px;font-size:12px;letter-spacing:0.538px;">1999</span><svg class="flag" style="left:975px;top:292px" width="16" height="18" viewBox="0 0 16 18"><rect x="0.9" y="0.9" width="11.2" height="10.2" fill="url(#wf)" stroke="#44608e" stroke-width="1.8"/><rect x="12.4" y="0" width="2.6" height="17.4" fill="#6b3a14"/><rect x="13.4" y="1" width="1" height="15.6" fill="#c98a4a"/></svg><span class="t" style="left:879.72px;top:317.85px;font-size:12px;letter-spacing:0.504px;">1999</span><span class="t" style="left:930.02px;top:317.85px;font-size:12px;letter-spacing:0.538px;">1998</span><svg class="flag" style="left:975px;top:316px" width="16" height="18" viewBox="0 0 16 18"><rect x="0.5" y="0.5" width="12" height="11" fill="#ee5558" stroke="#d8262c"/><rect x="2" y="2" width="9" height="8" fill="none" stroke="#f8a0a0" stroke-width="1"/><rect x="1" y="10" width="11" height="1.5" fill="#c81414"/><rect x="12.4" y="0" width="2.6" height="17.4" fill="#6b3a14"/><rect x="13.4" y="1" width="1" height="15.6" fill="#c98a4a"/></svg><span class="t" style="left:879.72px;top:341.85px;font-size:12px;letter-spacing:0.504px;">1999</span><span class="t" style="left:930.02px;top:341.85px;font-size:12px;letter-spacing:0.538px;">1998</span><svg class="flag" style="left:975px;top:340px" width="16" height="18" viewBox="0 0 16 18"><rect x="0.9" y="0.9" width="11.2" height="10.2" fill="url(#wf)" stroke="#44608e" stroke-width="1.8"/><rect x="12.4" y="0" width="2.6" height="17.4" fill="#6b3a14"/><rect x="13.4" y="1" width="1" height="15.6" fill="#c98a4a"/></svg><span class="t" style="left:879.72px;top:365.85px;font-size:12px;letter-spacing:0.504px;">2000</span><span class="t" style="left:930.02px;top:365.85px;font-size:12px;letter-spacing:0.538px;">1999</span><svg class="flag" style="left:975px;top:364px" width="16" height="18" viewBox="0 0 16 18"><rect x="0.5" y="0.5" width="12" height="11" fill="#ffe600" stroke="#f29a12"/><rect x="1.5" y="1.5" width="10" height="9" fill="none" stroke="#fbc040" stroke-width="1"/><rect x="1" y="10" width="11" height="1.5" fill="#d86a08"/><rect x="12.4" y="0" width="2.6" height="17.4" fill="#6b3a14"/><rect x="13.4" y="1" width="1" height="15.6" fill="#c98a4a"/></svg><span class="t" style="left:879.72px;top:389.85px;font-size:12px;letter-spacing:0.504px;">2005</span><span class="t" style="left:930.02px;top:389.85px;font-size:12px;letter-spacing:0.538px;">2004</span><svg class="flag" style="left:975px;top:388px" width="16" height="18" viewBox="0 0 16 18"><rect x="0.9" y="0.9" width="11.2" height="10.2" fill="url(#wf)" stroke="#44608e" stroke-width="1.8"/><rect x="12.4" y="0" width="2.6" height="17.4" fill="#6b3a14"/><rect x="13.4" y="1" width="1" height="15.6" fill="#c98a4a"/></svg><span class="t" style="left:879.72px;top:413.85px;font-size:12px;letter-spacing:0.504px;">2004</span><span class="t" style="left:930.02px;top:413.85px;font-size:12px;letter-spacing:0.538px;">2004</span><svg class="flag" style="left:975px;top:412px" width="16" height="18" viewBox="0 0 16 18"><rect x="0.9" y="0.9" width="11.2" height="10.2" fill="url(#wf)" stroke="#44608e" stroke-width="1.8"/><rect x="12.4" y="0" width="2.6" height="17.4" fill="#6b3a14"/><rect x="13.4" y="1" width="1" height="15.6" fill="#c98a4a"/></svg><span class="t" style="left:879.72px;top:437.85px;font-size:12px;letter-spacing:0.504px;">2004</span><span class="t" style="left:930.02px;top:437.85px;font-size:12px;letter-spacing:0.538px;">2003</span><svg class="flag" style="left:975px;top:436px" width="16" height="18" viewBox="0 0 16 18"><rect x="0.9" y="0.9" width="11.2" height="10.2" fill="url(#wf)" stroke="#44608e" stroke-width="1.8"/><rect x="12.4" y="0" width="2.6" height="17.4" fill="#6b3a14"/><rect x="13.4" y="1" width="1" height="15.6" fill="#c98a4a"/></svg><span class="t" style="left:879.72px;top:461.85px;font-size:12px;letter-spacing:0.504px;">2006</span><span class="t" style="left:930.02px;top:461.85px;font-size:12px;letter-spacing:0.538px;">2005</span><svg class="flag" style="left:975px;top:460px" width="16" height="18" viewBox="0 0 16 18"><rect x="0.9" y="0.9" width="11.2" height="10.2" fill="url(#wf)" stroke="#44608e" stroke-width="1.8"/><rect x="12.4" y="0" width="2.6" height="17.4" fill="#6b3a14"/><rect x="13.4" y="1" width="1" height="15.6" fill="#c98a4a"/></svg><span class="t" style="left:879.72px;top:485.85px;font-size:12px;letter-spacing:0.504px;">2006</span><span class="t" style="left:930.02px;top:485.85px;font-size:12px;letter-spacing:0.538px;">2004</span><svg class="flag" style="left:975px;top:484px" width="16" height="18" viewBox="0 0 16 18"><rect x="0.9" y="0.9" width="11.2" height="10.2" fill="url(#wf)" stroke="#44608e" stroke-width="1.8"/><rect x="12.4" y="0" width="2.6" height="17.4" fill="#6b3a14"/><rect x="13.4" y="1" width="1" height="15.6" fill="#c98a4a"/></svg><i class="vline" style="left:0;background:#a9adb3"></i><i class="vline" style="left:30px"></i><i class="vline" style="left:182px"></i><i class="vline" style="left:773px"></i><i class="vline" style="left:873px"></i><i class="vline" style="left:923px"></i><i class="vline" style="left:973px"></i></div><div class="abs" style="left:270px;top:604px;width:994px;height:150px;background:rgba(255,255,255,.22)"></div><div class="abs" style="left:270px;top:604px;width:994px;height:1px;background:#b3b7bd"></div><div class="abs dbox" style="left:270px;top:608px;width:496px;height:142px"><div class="vsb" style="left:478px;top:1px;width:16px;height:140px"><div class="sbtn" style="top:0"><span class="tri up" style="left:4px;top:5px"></span></div><div class="sthumb" style="top:15px;height:67px"><i></i></div><div class="sbtn" style="bottom:0"><span class="tri dn2" style="left:4px;top:5px"></span></div></div></div><span class="t" style="left:275.12px;top:612.85px;font-size:12px;font-weight:bold;letter-spacing:0.645px;">WO2003062248A2</span><span class="t" style="left:275.12px;top:628.85px;font-size:12px;font-weight:bold;letter-spacing:0.270px;">N-(BENZYL)AMINOALKYLCARBOXYLATES, PHOSPHINATES,</span><span class="t" style="left:275.12px;top:644.85px;font-size:12px;font-weight:bold;letter-spacing:0.068px;">PHOSPHONATES AND TETRAZOLES AS EDG RECEPTOR AGONISTS</span><span class="t" style="left:275.12px;top:676.85px;font-size:12px;font-weight:bold;letter-spacing:0.048px;">US Class  (primary):</span><span class="t" style="left:415.72px;top:676.85px;font-size:12px;letter-spacing:0.256px;">null</span><span class="t" style="left:275.12px;top:692.85px;font-size:12px;font-weight:bold;letter-spacing:0.115px;">IPC Class (primary):</span><span class="t" style="left:417.12px;top:692.85px;font-size:12px;letter-spacing:0.382px;">C07F000</span><span class="t" style="left:275.12px;top:724.85px;font-size:12px;font-weight:bold;letter-spacing:-0.408px;">Abstract:</span><div class="abs dbox" style="left:769px;top:608px;width:495px;height:142px"><div class="vsb" style="left:477px;top:1px;width:16px;height:140px"><div class="sbtn" style="top:0"><span class="tri up" style="left:4px;top:5px"></span></div><div class="sthumb" style="top:14px;height:11px"><i style="height:5px;margin-top:-3px"></i></div><div class="sbtn" style="bottom:0"><span class="tri dn2" style="left:4px;top:5px"></span></div></div></div><span class="t" style="left:773.92px;top:612.85px;font-size:12px;font-weight:bold;letter-spacing:-0.161px;">Claims:</span><span class="t" style="left:773.42px;top:628.85px;font-size:12px;letter-spacing:0.367px;">WHAT IS CLAIMED IS:1. A compound of Formula I R3 I 5 I C or a</span><span class="t" style="left:773.42px;top:644.85px;font-size:12px;letter-spacing:0.258px;">pharmaceutically acceptable salt or hydrate thereof, wherein: Ar is phenyl</span><span class="t" style="left:773.42px;top:660.85px;font-size:12px;letter-spacing:0.333px;">or naphthyl; A is selected from:-CO2H, lH-tetrazol-5-yl,-PO3H2,-PO2H2,-</span><span class="t" style="left:773.42px;top:676.85px;font-size:12px;letter-spacing:0.310px;">SO3H, and-Po(R5)0H, wherein R5 is selected from the group consisting of:</span><span class="t" style="left:773.42px;top:692.85px;font-size:12px;letter-spacing:0.309px;">C1 4alkyl, hydroxyC1 4alkyl, phenyl,-C(O)-C1 3alkoxy and-CH(OH)-phenyl,</span><span class="t" style="left:773.42px;top:708.85px;font-size:12px;letter-spacing:0.306px;">said phenyl and phenyl portion of-CH(OH)-phenyl optionally substituted</span><span class="t" style="left:773.42px;top:724.85px;font-size:12px;letter-spacing:0.316px;">with 1-3 substituents independently selected from the group consisting</span><div class="abs ybar" style="left:270px;top:754px;width:994px;height:30px"><div class="fbtn yb" style="position:absolute;left:223px;top:4px;width:50px;height:23px"><i class="bsep" style="left:27px;top:4px"></i><span class="tri dn3" style="left:34px;top:9px"></span></div><div style="position:absolute;left:330px;top:3px;width:485px;height:24px;background:#fff;border:1px solid #b6b6a8;border-top-color:#8e8e86"></div><div style="position:absolute;left:879px;top:3px;width:110px;height:24px;background:#dedede;border:1px solid #c4c4b8;border-top-color:#8a8a84"></div></div><span class="t" style="left:277.42px;top:762.85px;font-size:12px;font-weight:bold;letter-spacing:0.652px;">WO2003062248A2</span><span class="t" style="left:434.82px;top:762.85px;font-size:12px;font-weight:bold;letter-spacing:-0.461px;">Rating:</span><span class="t" style="left:503.22px;top:763.85px;font-size:12px;font-weight:bold;">1</span><span class="t" style="left:553.12px;top:762.85px;font-size:12px;font-weight:bold;letter-spacing:-0.155px;">Tags:</span><span class="t" style="left:604.22px;top:762.85px;font-size:12px;letter-spacing:0.515px;">New tag</span><span class="t" style="left:1095.22px;top:762.85px;font-size:12px;font-weight:bold;letter-spacing:-0.310px;color:#c0c29c;">Notes:</span><div class="abs ddl" style="left:493px;top:671px;width:50px;height:86px"><div class="hov" style="top:20px"></div></div><span class="t" style="left:499.72px;top:674.85px;font-size:12px;">—</span><span class="t" style="left:500.72px;top:696.85px;font-size:12px;">1</span><span class="t" style="left:500.22px;top:718.85px;font-size:12px;">2</span><span class="t" style="left:500.22px;top:740.85px;font-size:12px;">3</span><svg class="abs" style="left:540px;top:660px" width="204" height="80" viewBox="540 660 204 80"><defs><filter id="sh" x="-10%" y="-20%" width="125%" height="160%"><feGaussianBlur stdDeviation="1.8"/></filter><filter id="bl" x="-10%" y="-10%" width="120%" height="120%"><feGaussianBlur stdDeviation="1.6"/></filter><clipPath id="cc"><path d="M549 700.6 L605.3 688.6 V685 Q605.3 673.4 617 673.4 H716 Q727.8 673.4 727.8 685 V713.6 Q727.8 725.3 716 725.3 H617 Q605.3 725.3 605.3 713.6 V696.6 Z"/></clipPath></defs><path d="M549 700.6 L605.3 688.6 V685 Q605.3 673.4 617 673.4 H716 Q727.8 673.4 727.8 685 V713.6 Q727.8 725.3 716 725.3 H617 Q605.3 725.3 605.3 713.6 V696.6 Z" fill="#2c3138" opacity=".72" transform="translate(3.2,3.8)" filter="url(#sh)"/><path d="M549 700.6 L605.3 688.6 V685 Q605.3 673.4 617 673.4 H716 Q727.8 673.4 727.8 685 V713.6 Q727.8 725.3 716 725.3 H617 Q605.3 725.3 605.3 713.6 V696.6 Z" fill="#6e9cad"/><g clip-path="url(#cc)"><rect x="609.5" y="678" width="114" height="43.5" rx="8" fill="#bee1ec" filter="url(#bl)"/><path d="M552 700.4 L606 690.2 V696.2 Z" fill="#a9d0dc" filter="url(#bl)"/></g><path d="M613.6 710 V688 Q613.6 681.8 620 681.8 H717" fill="none" stroke="#fff" stroke-width="1.5" stroke-linecap="round" opacity=".95"/><path d="M549 700.6 L605.3 688.6 V685 Q605.3 673.4 617 673.4 H716 Q727.8 673.4 727.8 685 V713.6 Q727.8 725.3 716 725.3 H617 Q605.3 725.3 605.3 713.6 V696.6 Z" fill="none" stroke="#1b3a5c" stroke-width="1.1" stroke-linejoin="round"/><text x="664.7" y="694.6" text-anchor="middle" font-family="'DejaVu Serif','Liberation Serif',serif" font-weight="bold" font-size="13" fill="#0a0a10">Rating</text><text x="664.8" y="713.5" text-anchor="middle" font-family="'DejaVu Serif','Liberation Serif',serif" font-weight="bold" font-size="13" fill="#0a0a10">Feature</text></svg><svg class="abs" style="left:520px;top:694px" width="30" height="36" viewBox="520 694 30 36"><defs><filter id="cs" x="-30%" y="-30%" width="180%" height="180%"><feGaussianBlur stdDeviation="1.2"/></filter></defs><path d="M525.5 699 L525.8 714.8 L531.3 712.6 L536.2 721.8 L538.4 720.2 L534 711 L538.8 708.5 Z" fill="#000" opacity=".4" transform="translate(2.5,3)" filter="url(#cs)"/><path d="M525.5 699 L525.8 714.8 L531.3 712.6 L536.2 721.8 L538.4 720.2 L534 711 L538.8 708.5 Z" fill="#030303" stroke="#030303" stroke-width=".6" stroke-linejoin="round"/></svg></div></body></html>
